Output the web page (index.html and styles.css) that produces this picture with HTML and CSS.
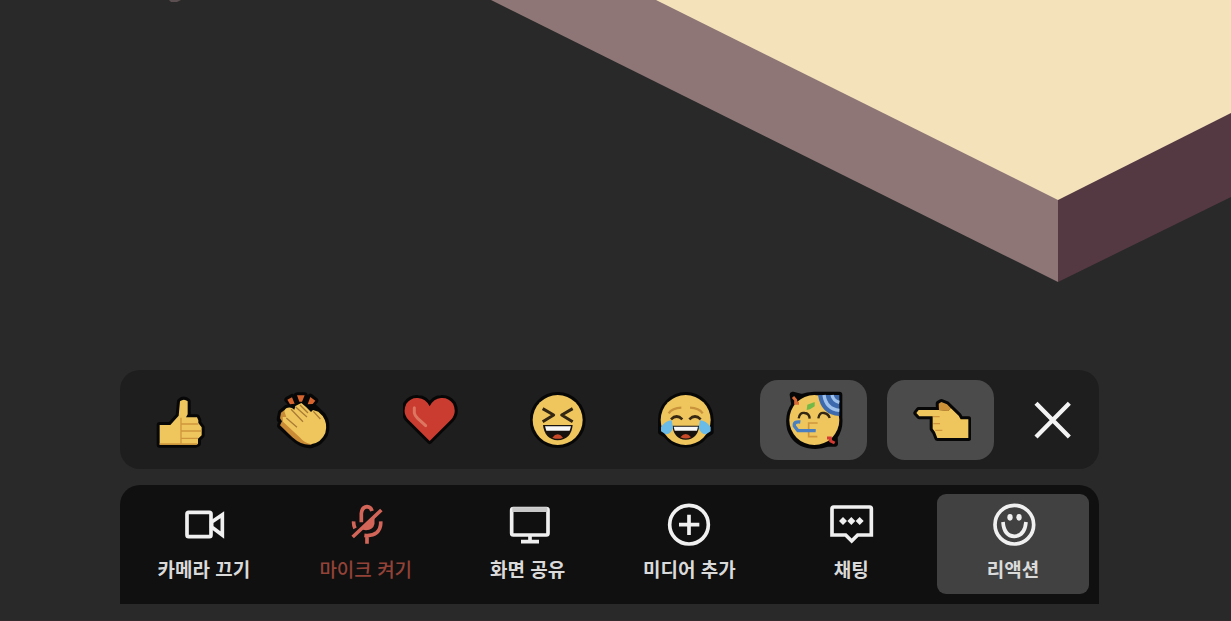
FILE: index.html
```
<!DOCTYPE html>
<html lang="ko">
<head>
<meta charset="utf-8">
<title>리액션</title>
<link rel="stylesheet" href="styles.css">
</head>
<body>
<svg class="scene" viewBox="0 0 1231 621" preserveAspectRatio="xMaxYMin slice" aria-hidden="true">
  <path fill="#8e7676" d="M491 0H660L1058 199V282Z"/>
  <path fill="#553942" d="M1058 198L1231 111V197L1058 282Z"/>
  <path fill="#f4e2bb" d="M656 0H1231V113L1058 200Z"/>
  <path fill="#5b4f51" d="M169 0H181L177 2H171Z"/>
</svg>
<main class="dock">
  <section class="reactions" aria-label="리액션 선택">
    <button class="reaction" type="button" aria-label="좋아요">
      <svg class="emoji" viewBox="115 89 180 180">
        <path class="outline" d="M147 194H179L204 166 208 123Q220 113 231 123V162L226 171H259L263 180V188L273 201V225L262 235V250L256 253H147Z"/>
        <path fill="#efc65e" d="M147 194H179L204 166 208 123Q220 113 231 123V162L226 171H259L263 180V188L273 201V225L262 235V250L256 253H147Z"/>
        <path fill="none" stroke="#cf963c" stroke-width="4" d="M211 172V251M211 191H263M211 212H272M211 234H262M147 251H260"/>
      </svg>
    </button>
    <button class="reaction" type="button" aria-label="박수">
      <svg class="emoji" viewBox="497 89 180 180">
        <path class="outline" d="M531 118L545 110 552 126H566L560 105H583L576 126H590L600 109 615 121 604 134 622 150 638 165Q655 190 644 222 630 249 604 254 575 258 545 229L509 196 513 185 508 177 512 157 530 142 550 139Z"/>
        <path fill="#c98b35" d="M530 143L512 157 509 174 515 183 509 195 546 231Q575 257 604 253L570 205Z"/>
        <path fill="#efc65e" d="M526 145Q540 136 552 148L555 137 573 128 588 141 602 155 608 149 624 154 637 167Q653 190 645 218 632 248 602 252 582 248 568 231L518 184 517 170 528 170 522 153Z"/>
        <path fill="none" stroke="#a97c36" stroke-width="4" d="M542 147L578 184M556 140L590 170M569 134L593 158M528 173L560 201M609 153L630 176"/>
        <path fill="#d5642f" d="M531 118L545 111 553 130 539 132ZM560 105H583L575 124H567ZM600 110L615 121 607 131 592 132Z"/>
      </svg>
    </button>
    <button class="reaction" type="button" aria-label="하트">
      <svg class="emoji" viewBox="127 89 180 180">
        <path class="outline" d="M207 242L143 178Q124 157 137 130 151 111 172 113 195 114 207 138 219 114 241 113 263 111 277 130 290 157 271 178Z"/>
        <path fill="#ca3b30" d="M207 242L143 178Q124 157 137 130 151 111 172 113 195 114 207 138 219 114 241 113 263 111 277 130 290 157 271 178Z"/>
        <path fill="none" stroke="#dc7660" stroke-width="9" stroke-linecap="round" d="M161 142V158Q162 165 171 174L195 196"/>
      </svg>
    </button>
    <button class="reaction" type="button" aria-label="크게 웃기">
      <svg class="emoji" viewBox="508 89 180 180">
        <circle class="outline" cx="591" cy="179" r="75"/>
        <circle fill="#efc65e" cx="591" cy="179" r="75"/>
        <path fill="none" stroke="#332714" stroke-width="9" stroke-linejoin="round" d="M546 145L579 164 546 184M636 145L603 164 636 184"/>
        <path fill="#17120d" d="M547 194H636Q632 238 591 240 552 238 547 194Z"/>
        <path fill="#f7f7f7" d="M553 198H631L627 211H557Z"/>
        <path fill="#c94a28" d="M575 232Q591 212 607 232 592 239 575 232Z"/>
      </svg>
    </button>
    <button class="reaction" type="button" aria-label="기쁨의 눈물">
      <svg class="emoji" viewBox="139 89 180 180">
        <path class="outline" d="M225 104A75 75 0 0 1 300 179V215L285 224A75 75 0 0 1 166 224L151 215V179A75 75 0 0 1 225 104Z"/>
        <circle fill="#efc65e" cx="225" cy="179" r="75"/>
        <path fill="none" stroke="#c9933c" stroke-width="7" d="M174 159Q185 143 212 142M276 159Q265 143 238 142"/>
        <path fill="none" stroke="#382913" stroke-width="8" d="M181 177Q198 160 215 177M236 177Q253 160 270 177"/>
        <path fill="#17120d" d="M185 196H266Q261 236 225 238 190 236 185 196Z"/>
        <path fill="#f7f7f7" d="M189 199H262L259 211H192Z"/>
        <path fill="#c94a28" d="M209 231Q225 211 241 231 226 238 209 231Z"/>
        <path fill="#6abbe7" d="M183 180L187 202Q180 222 165 222L151 213V200Q165 181 183 180ZM268 180L264 202Q271 222 286 222L300 213V200Q286 181 268 180Z"/>
      </svg>
    </button>
    <button class="reaction selected" type="button" aria-label="파티">
      <svg class="emoji" viewBox="520 89 180 180">
        <path class="outline" d="M546 103L572 110Q590 103 611 103H686V173Q689 205 672 229L673 250H651Q625 260 594 255 552 246 538 205 529 164 551 133Z"/>
        <circle fill="#efc65e" cx="611" cy="179" r="75"/>
        <path fill="#3d6aac" d="M622 104H686V167Q631 164 622 104Z"/>
        <path fill="none" stroke="#9fc2ec" stroke-width="10" d="M640 104Q646 146 686 150M664 104Q668 122 686 126"/>
        <path fill="none" stroke="#332714" stroke-width="7" d="M564 174Q567 155 582 158 596 159 597 175M623 174Q626 155 640 158 654 161 657 173"/>
        <path fill="none" stroke="#cf963c" stroke-width="5" d="M621 188H594V229H620M596 209H615"/>
        <path fill="none" stroke="#4a80c1" stroke-width="10" stroke-linejoin="round" d="M569 185Q549 182 551 197L562 211H615"/>
        <path fill="#72b947" d="M588 149L590 133 612 125 612 138 598 147Z"/>
        <path fill="none" stroke="#d76a35" stroke-width="9" d="M547 110L555 119 555 129 565 129"/>
        <path fill="none" stroke="#d43b32" stroke-width="9" d="M649 233L659 233 660 242 672 248"/>
      </svg>
    </button>
    <button class="reaction selected" type="button" aria-label="왼쪽 가리키기">
      <svg class="emoji" viewBox="121 89 180 180">
        <path class="outline" d="M137 158L144 149H205L204 130 212 125 229 132 264 166 270 177H293V233H200L193 215 186 205V168H146Z"/>
        <path fill="#efc65e" d="M137 158L144 149H205L233 151 240 143 264 166 270 177H293V233H200L193 215 186 205V168H146Z"/>
        <path fill="#cd9138" d="M205 150L204 130 212 125 229 132 240 143 233 152Z"/>
        <path fill="none" stroke="#cf963c" stroke-width="4" d="M187 169H207M188 190H208M194 210H215"/>
      </svg>
    </button>
    <button class="close" type="button" aria-label="닫기">
      <svg class="emoji" viewBox="454 89 180 180"><path fill="none" stroke="#f3f3f3" stroke-width="13" d="M496 129L596 230M596 129L496 230"/></svg>
    </button>
  </section>
  <nav class="toolbar" aria-label="회의 도구">
    <button class="tool" type="button">
      <svg class="icon" viewBox="210 75 144 144"><rect x="231" y="112" width="72" height="73" rx="5"/><path d="M305 141L337 119V180L305 156Z"/></svg>
      <span>카메라 끄기</span>
    </button>
    <button class="tool muted" type="button">
      <svg class="icon" viewBox="695 75 144 144"><path d="M753 142V115Q755 96 770 95 782 96 785 108M730 139Q729 150 734 160M811 139Q813 159 799 173 786 184 762 181M770 184V206M727 186L813 105"/><path d="M787 130V146Q784 160 767 160L756 158M776 140V150L766 160"/></svg>
      <span>마이크 켜기</span>
    </button>
    <button class="tool" type="button">
      <svg class="icon" viewBox="191 75 144 144"><rect x="214" y="101" width="109" height="79" rx="5"/><path d="M269 180V199M242 200H296"/><path class="bezel" d="M216 104H321"/></svg>
      <span>화면 공유</span>
    </button>
    <button class="tool" type="button">
      <svg class="icon" viewBox="676 75 144 144"><circle cx="748" cy="149" r="58"/><path d="M748 119V180M718 149H779"/></svg>
      <span>미디어 추가</span>
    </button>
    <button class="tool" type="button">
      <svg class="icon" viewBox="172 75 144 144"><path d="M192 96H300Q305 96 305 101V180H264L246 198 228 180H187V101Q187 96 192 96Z"/><path class="solid" d="M220 126L232 138 220 150 208 138ZM245 126L257 138 245 150 233 138ZM270 126L282 138 270 150 258 138Z"/></svg>
      <span>채팅</span>
    </button>
    <button class="tool active" type="button" aria-pressed="true">
      <svg class="icon" viewBox="657 75 144 144"><circle cx="733" cy="149" r="58"/><path d="M699 141Q702 183 733 184 764 183 768 141"/><ellipse class="solid" cx="720" cy="127" rx="8" ry="10"/><ellipse class="solid" cx="747" cy="127" rx="8" ry="10"/></svg>
      <span>리액션</span>
    </button>
  </nav>
</main>
</body>
</html>
```
FILE: styles.css
```
* {
  box-sizing: border-box;
}

body {
  margin: 0;
  min-height: 100vh;
  display: flex;
  flex-direction: column;
  justify-content: flex-end;
  background: #292929;
  font-family: "Noto Sans CJK KR", sans-serif;
}

.scene {
  position: absolute;
  inset: 0;
  width: 100%;
  height: 100%;
}

.dock {
  position: relative;
  display: flex;
  flex-direction: column;
  gap: 16px;
  padding: 0 132px 16px 120px;
  border-bottom: 1px solid #342b2f;
}

button {
  margin: 0;
  border: 0;
  background: transparent;
  color: inherit;
  font: inherit;
  cursor: pointer;
}

.reactions {
  display: grid;
  grid-template-columns: repeat(7, 107fr) 75fr;
  gap: 20px;
  padding: 10px 10px 9px 5px;
  border-radius: 20px;
  background: #1e1e1e;
}

.reaction,
.close {
  display: flex;
  align-items: center;
  justify-content: center;
  padding: 10px 0;
  border-radius: 18px;
}

.selected {
  background: #4b4b4b;
}

.emoji {
  flex: none;
  width: 60px;
  height: 60px;
}

.outline {
  fill: #070707;
  stroke: #070707;
  stroke-width: 18px;
  stroke-linejoin: round;
}

.toolbar {
  display: grid;
  grid-template-columns: repeat(6, 1fr);
  gap: 10px;
  padding: 9px 10px 10px 8px;
  border-radius: 20px 20px 0 0;
  background: #101010;
}

.tool {
  display: flex;
  flex-direction: column;
  align-items: center;
  gap: 9px;
  padding: 6px 0 13px;
  border-radius: 9px;
  color: #dadada;
  font-size: 19px;
  font-weight: 700;
  line-height: 24px;
  white-space: nowrap;
}

.active {
  background: #414141;
}

.muted {
  color: #934238;
  font-weight: 500;
}

.icon {
  width: 48px;
  height: 48px;
  fill: none;
  stroke: #f0f0f0;
  stroke-width: 11px;
}

.icon .solid {
  fill: #f0f0f0;
  stroke: none;
}

.icon .bezel {
  stroke: #c8c8c8;
  stroke-width: 14px;
}

.muted .icon {
  stroke: #d36558;
}
```
